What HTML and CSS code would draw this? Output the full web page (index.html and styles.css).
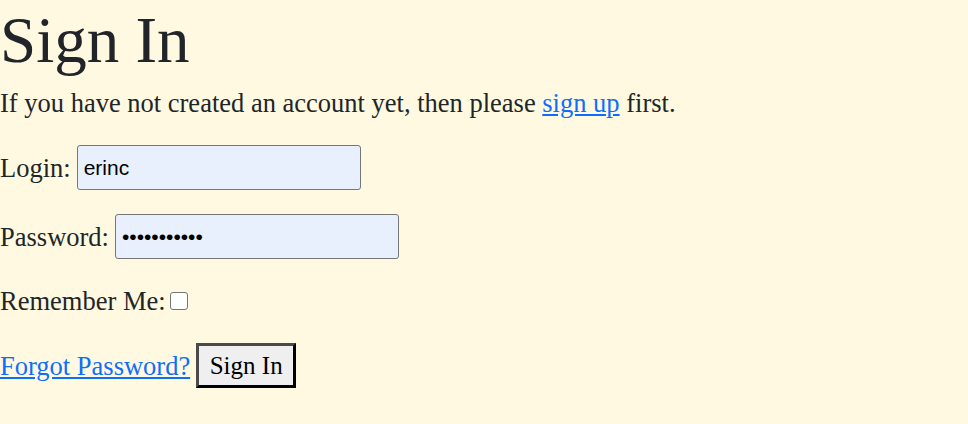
FILE: index.html
```html
<!DOCTYPE html>
<html>
<head>
<meta charset="utf-8">
<link rel="stylesheet" href="styles.css">
</head>
<body>
<main class="page">
  <h1 class="title">Sign In</h1>
  <p class="intro">If you have not created an account yet, then please <a href="#" class="link">sign up</a> first.</p>
  <form class="form">
    <div class="row"><label class="label">Login:</label><input class="field" type="text" value="erinc"></div>
    <div class="row"><label class="label">Password:</label><input class="field" type="password" value="abcdefghijk"></div>
    <div class="row row-check"><label class="label">Remember Me:</label><span class="check"></span></div>
    <div class="row"><a href="#" class="link">Forgot Password?</a><button type="button" class="btn">Sign In</button></div>
  </form>
</main>
</body>
</html>
```
FILE: styles.css
```css
html, body {
  margin: 0;
  padding: 0;
  background: #fef9e0;
}
body {
  font-family: "Liberation Serif", "DejaVu Serif", serif;
  font-size: 26.5px;
  color: #212529;
}
.page {
  display: flex;
  flex-direction: column;
}
.title {
  margin: 0;
  font-weight: 400;
  font-size: 65px;
  line-height: 80px;
  height: 85px;
}
.intro {
  margin: 0 0 24px 0;
  line-height: 36px;
}
.link {
  color: #0d6efd;
  text-decoration: underline;
}
.form {
  display: flex;
  flex-direction: column;
  gap: 24px;
}
.row {
  display: flex;
  align-items: center;
  gap: 6px;
  line-height: 36px;
}
.field {
  box-sizing: border-box;
  width: 284px;
  height: 45px;
  margin: 0;
  border: 1px solid #767676;
  border-radius: 3px;
  background: #e8f0fe;
  font-family: "Liberation Sans", Arial, sans-serif;
  font-size: 21px;
  color: #000;
  padding: 0 6px;
}
.check {
  box-sizing: border-box;
  width: 18px;
  height: 18px;
  border: 1.5px solid #767676;
  border-radius: 3px;
  background: #fff;
  align-self: center;
  margin-left: -2px;
}
.btn {
  box-sizing: border-box;
  height: 45px;
  width: 100px;
  margin: 0;
  padding: 0;
  background: #efefef;
  border-style: solid;
  border-width: 3px;
  border-color: #4a4a4a #000 #000 #4a4a4a;
  font-family: "Liberation Serif", serif;
  font-size: 25px;
  color: #000;
}
```
